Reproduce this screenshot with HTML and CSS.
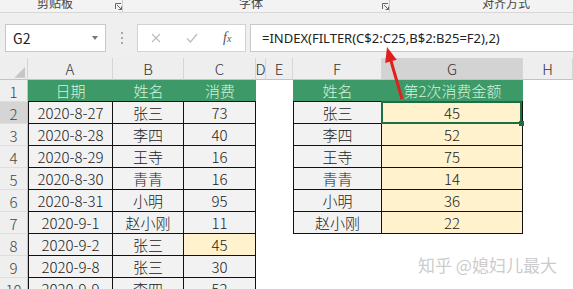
FILE: index.html
```html
<!DOCTYPE html>
<html lang="zh">
<head>
<meta charset="utf-8">
<link rel="stylesheet" href="styles.css">
</head>
<body>
<div class="ribbon">
  <div class="grp g1"><span class="lbl">剪贴板</span><svg class="launch" viewBox="0 0 7 7"><path d="M0.5 6V0.5H6" fill="none" stroke="#666"/><path d="M2 2L6.5 6.5M6.5 3.5V6.5H3.5" fill="none" stroke="#666"/></svg></div>
  <div class="grp g2"><span class="lbl">字体</span><svg class="launch" viewBox="0 0 7 7"><path d="M0.5 6V0.5H6" fill="none" stroke="#666"/><path d="M2 2L6.5 6.5M6.5 3.5V6.5H3.5" fill="none" stroke="#666"/></svg></div>
  <div class="grp g3"><span class="lbl">对齐方式</span></div>
</div>
<div class="fbar">
  <div class="namebox"><span>G2</span><span class="caret"></span></div>
  <div class="dots"><i></i><i></i><i></i></div>
  <div class="fxbox">
    <svg class="ico x" viewBox="0 0 10 10"><path d="M1 1L9 9M9 1L1 9" stroke="#bdbdbd" stroke-width="1.2"/></svg>
    <svg class="ico ok" viewBox="0 0 12 10"><path d="M1 5.5L4.5 9L11 1" fill="none" stroke="#bdbdbd" stroke-width="1.3"/></svg>
    <span class="fx">f<small>x</small></span>
  </div>
  <div class="formula">=INDEX(FILTER(C$2:C25,B$2:B25=F2),2)</div>
</div>
<div class="sheet">
  <div class="row hdr">
    <div class="c corner"><svg viewBox="0 0 28 22" width="28" height="22"><polygon points="26,9 26,20 15,20" fill="#c6c6c6"/></svg></div>
    <div class="c ch">A</div><div class="c ch">B</div><div class="c ch">C</div><div class="c ch">D</div><div class="c ch">E</div><div class="c ch">F</div><div class="c ch chs">G</div><div class="c ch">H</div>
  </div>
  <div class="row">
    <div class="c rh">1</div>
    <div class="c g">日期</div><div class="c g">姓名</div><div class="c g">消费</div><div class="c"></div><div class="c"></div><div class="c g">姓名</div><div class="c g">第2次消费金额</div><div class="c"></div>
  </div>
  <div class="row">
    <div class="c rh rhs">2</div>
    <div class="c d l">2020-8-27</div><div class="c d">张三</div><div class="c d">73</div><div class="c"></div><div class="c"></div><div class="c d l">张三</div><div class="c d y sel">45</div><div class="c"></div>
  </div>
  <div class="row">
    <div class="c rh">3</div>
    <div class="c d l">2020-8-28</div><div class="c d">李四</div><div class="c d">40</div><div class="c"></div><div class="c"></div><div class="c d l">李四</div><div class="c d y">52</div><div class="c"></div>
  </div>
  <div class="row">
    <div class="c rh">4</div>
    <div class="c d l">2020-8-29</div><div class="c d">王寺</div><div class="c d">16</div><div class="c"></div><div class="c"></div><div class="c d l">王寺</div><div class="c d y">75</div><div class="c"></div>
  </div>
  <div class="row">
    <div class="c rh">5</div>
    <div class="c d l">2020-8-30</div><div class="c d">青青</div><div class="c d">16</div><div class="c"></div><div class="c"></div><div class="c d l">青青</div><div class="c d y">14</div><div class="c"></div>
  </div>
  <div class="row">
    <div class="c rh">6</div>
    <div class="c d l">2020-8-31</div><div class="c d">小明</div><div class="c d">95</div><div class="c"></div><div class="c"></div><div class="c d l">小明</div><div class="c d y">36</div><div class="c"></div>
  </div>
  <div class="row">
    <div class="c rh">7</div>
    <div class="c d l">2020-9-1</div><div class="c d">赵小刚</div><div class="c d">11</div><div class="c"></div><div class="c"></div><div class="c d l">赵小刚</div><div class="c d y">22</div><div class="c"></div>
  </div>
  <div class="row">
    <div class="c rh">8</div>
    <div class="c d l">2020-9-2</div><div class="c d">张三</div><div class="c d y">45</div><div class="c"></div><div class="c"></div><div class="c"></div><div class="c"></div><div class="c"></div>
  </div>
  <div class="row">
    <div class="c rh">9</div>
    <div class="c d l">2020-9-8</div><div class="c d">张三</div><div class="c d">30</div><div class="c"></div><div class="c"></div><div class="c"></div><div class="c"></div><div class="c"></div>
  </div>
  <div class="row">
    <div class="c rh">10</div>
    <div class="c d l">2020-9-9</div><div class="c d">李四</div><div class="c d">52</div><div class="c"></div><div class="c"></div><div class="c"></div><div class="c"></div><div class="c"></div>
  </div>
</div>
<svg class="arrow" width="573" height="289" viewBox="0 0 573 289">
  <line x1="402" y1="99" x2="391" y2="61" stroke="#e0201e" stroke-width="3"/>
  <polygon points="387,47 396.7,59.7 385.2,63.1" fill="#e0201e"/>
</svg>
<div class="wm">知乎 @媳妇儿最大</div>
</body>
</html>
```
FILE: styles.css
```css
* { box-sizing: border-box; margin: 0; padding: 0; }
html, body { width: 573px; height: 289px; overflow: hidden; }
body {
  position: relative;
  background: #fff;
  color: #222;
  font-family: "Noto Sans CJK SC", "Noto Sans", sans-serif;
}

/* ribbon strip */
.ribbon {
  display: flex;
  height: 13px;
  background: #f3f3f3;
  border-bottom: 1px solid #d8d8d8;
  overflow: hidden;
  font-size: 12px;
  line-height: 12px;
  color: #444;
}
.grp { display: flex; height: 12px; border-right: 1px solid #cbcbcb; }
.g1 { width: 128px; }
.g2 { width: 271px; }
.g3 { flex: 1; border-right: none; }
.lbl { display: block; text-align: center; margin-top: -3px; white-space: nowrap; }
.g1 .lbl { width: 110px; }
.g2 .lbl { width: 256px; }
.g3 .lbl { width: 232px; }
.launch { width: 7px; height: 7px; margin-top: 3px; }
.g1 .launch { margin-left: 5px; }
.g2 .launch { margin-left: 3px; }

/* formula bar */
.fbar {
  display: flex;
  align-items: flex-start;
  height: 45px;
  padding: 11px 0 0 5px;
  background: #efefef;
}
.namebox {
  display: flex;
  align-items: center;
  justify-content: space-between;
  width: 101px;
  height: 28px;
  padding: 0 7px;
  background: #fff;
  border: 1px solid #c8c8c8;
  font-size: 14px;
  color: #222;
}
.caret {
  width: 0; height: 0;
  border-left: 3.5px solid transparent;
  border-right: 3.5px solid transparent;
  border-top: 4px solid #777;
}
.dots {
  display: flex;
  flex-direction: column;
  align-items: center;
  justify-content: center;
  gap: 3px;
  width: 31px;
  height: 28px;
}
.dots i { width: 2px; height: 2px; background: #aaa; }
.fxbox {
  display: flex;
  align-items: center;
  width: 109px;
  height: 28px;
  padding-left: 13px;
  background: #fff;
  border: 1px solid #d2d2d2;
}
.ico.x { width: 10px; height: 10px; }
.ico.ok { width: 12px; height: 10px; margin-left: 25px; }
.fx {
  margin-left: 25px;
  font-family: "Liberation Serif", serif;
  font-style: italic;
  font-size: 14px;
  color: #555;
}
.fx small { font-size: 10px; }
.formula {
  flex: 1;
  height: 28px;
  margin-left: 4px;
  padding-left: 11px;
  background: #fff;
  border: 1px solid #c8c8c8;
  border-right: none;
  font-family: "Noto Sans", sans-serif;
  font-size: 13px;
  line-height: 26px;
  color: #222;
  white-space: nowrap;
}

/* sheet grid */
.row {
  display: grid;
  grid-template-columns: 28px 85px 71px 72px 10px 27px 89px 141px 50px;
  height: 22px;
}
.c {
  display: flex;
  align-items: center;
  justify-content: center;
  font-size: 15px;
  font-weight: 300;
  white-space: nowrap;
  overflow: hidden;
}
.hdr { background: #eeeeee; }
.corner { background: #eeeeee; border-right: 1px solid #d3d3d3; border-bottom: 1px solid #c3c3c3; }
.ch {
  color: #333;
  border-right: 1px solid #d6d6d6;
  border-bottom: 1px solid #c3c3c3;
}
.chs { background: #d3d3d3; }
.rh {
  background: #efefef;
  color: #444;
  border-right: 1px solid #c3c3c3;
  border-bottom: 1px solid #dedede;
  padding-top: 2px;
}
.rhs { background: #d5d5d5; }
.g {
  background: #3d9968;
  color: #d3f4de;
  border-bottom: 1px solid #111;
}
.d {
  background: #f2f2f2;
  border-right: 1px solid #111;
  border-bottom: 1px solid #111;
}
.l { border-left: 1px solid #111; }
.y { background: #fff2cc; }
.sel { position: relative; overflow: visible; }
.sel::after {
  content: "";
  position: absolute;
  left: -1px; top: -1px; right: 0; bottom: -1px;
  border: 2px solid #1f6e43;
}
.sel::before {
  content: "";
  position: absolute;
  right: -2px; bottom: -3px;
  width: 5px; height: 5px;
  background: #1f6e43;
  z-index: 1;
}

/* overlays */
.arrow { position: absolute; left: 0; top: 0; pointer-events: none; }
.wm {
  position: absolute;
  left: 418px;
  top: 254px;
  font-size: 17px;
  line-height: 22px;
  color: #cccccc;
  white-space: nowrap;
}
```
